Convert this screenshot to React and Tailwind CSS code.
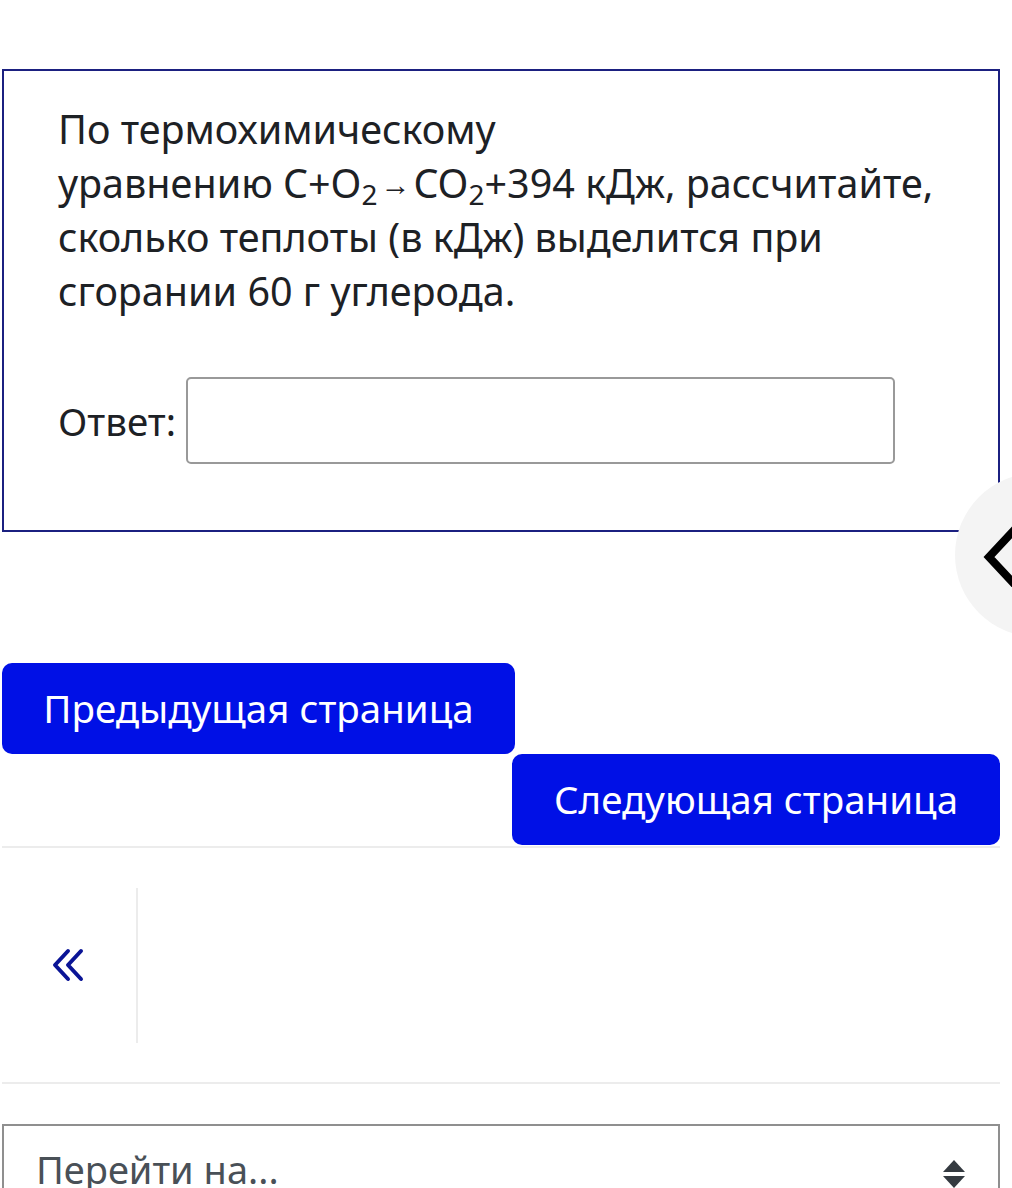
import React from "react";

export default function App() {
  return (
    <div
      className="relative w-[1012px] h-[1188px] overflow-hidden bg-white text-[#1d2125]"
      style={{ fontFamily: '"Noto Sans", "Open Sans", sans-serif' }}
    >
      <div className="pt-[69px] pl-[2px] w-[1000px]">
        {/* Question box */}
        <div className="border-2 border-[#1b2080] pt-[31px] pb-[66px] pl-[54px] pr-[10px]">
          <div className="text-[39.5px] leading-[54px] w-[930px]">
            <div>По термохимическому</div>
            <div className="whitespace-nowrap">
              уравнению C+O<span className="text-[28px] leading-none relative top-[7px]">2</span>
              <span className="inline-block text-[30px] leading-none relative -top-[3px] mx-[3px]">→</span>CO
              <span className="text-[28px] leading-none relative top-[7px]">2</span>+394 кДж, рассчитайте,
            </div>
            <div>сколько теплоты (в кДж) выделится при</div>
            <div>сгорании 60 г углерода.</div>
          </div>
          <div className="flex items-center mt-[59px]">
            <span className="text-[38.5px] leading-[54px]">Ответ:</span>
            <div className="ml-[10px] w-[709px] h-[87px] border-2 border-[#999999] rounded-[5px] bg-white" />
          </div>
        </div>

        {/* Buttons */}
        <div className="mt-[131px] pb-[1px] border-b-2 border-[#ececec]">
          <div className="flex">
            <div className="w-[513px] h-[91px] rounded-[10px] bg-[#0010e6] text-white text-[38.5px] flex items-center justify-center">
              Предыдущая страница
            </div>
          </div>
          <div className="flex justify-end">
            <div className="w-[488px] h-[91px] rounded-[10px] bg-[#0010e6] text-white text-[38.5px] flex items-center justify-center">
              Следующая страница
            </div>
          </div>
        </div>

        {/* Nav */}
        <div className="pt-[40px] pb-[39px] border-b-2 border-[#ececec]">
          <div className="flex h-[155px]">
            <div className="w-[136px] border-r-2 border-[#ececec] flex items-center justify-center">
              <svg width="36" height="36" viewBox="0 0 36 36" fill="none" stroke="#0a1496" strokeWidth="4" strokeLinecap="round" strokeLinejoin="round">
                <path d="M17 3 L4 17 L17 31" />
                <path d="M30 3 L17 17 L30 31" />
              </svg>
            </div>
          </div>
        </div>

        {/* Select */}
        <div className="mt-[40px] h-[120px] border-2 border-[#8f8f8f] flex items-start pt-[16px] pl-[32px] pr-[32px]">
          <span className="flex-1 text-[38px] leading-[54px] text-[#495057]">Перейти на...</span>
          <svg className="mt-[17px]" width="24" height="30" viewBox="0 0 24 30">
            <path d="M12 1 L23 13 L1 13 Z" fill="#343a40" />
            <path d="M1 17 L23 17 L12 29 Z" fill="#343a40" />
          </svg>
        </div>
      </div>

      {/* Floating drawer toggle */}
      <div className="absolute left-[955px] top-[473px] w-[164px] h-[164px] rounded-full bg-[#f4f4f4]">
        <svg className="absolute left-[26px] top-[50px]" width="40" height="64" viewBox="0 0 40 64" fill="none" stroke="#000" strokeWidth="8" strokeLinejoin="miter">
          <path d="M36 4 L8 34 L36 64" />
        </svg>
      </div>
    </div>
  );
}
